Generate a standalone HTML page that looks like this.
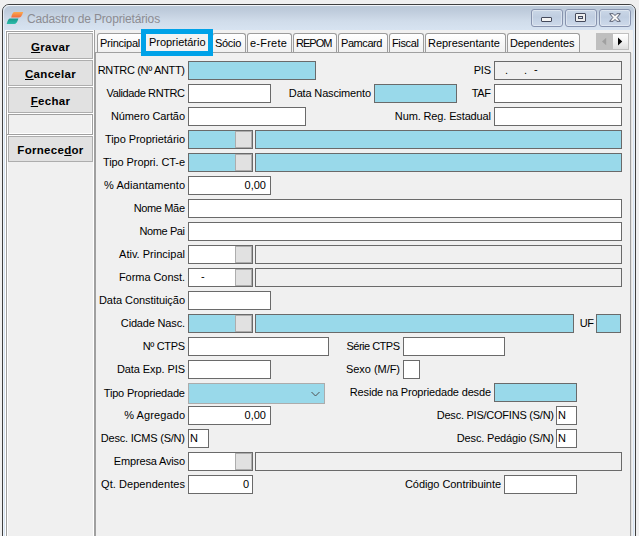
<!DOCTYPE html>
<html><head><meta charset="utf-8">
<style>
html,body{margin:0;padding:0;}
body{width:639px;height:536px;overflow:hidden;background:#f0f0f0;position:relative;font-family:"Liberation Sans",sans-serif;font-size:11px;color:#000;}
.abs,.abs div,.abs svg,.ft,.fr{position:absolute;box-sizing:border-box;}
#win{left:2px;top:4px;width:634px;height:560px;border:1px solid #404040;border-radius:7px 7px 0 0;background:#d7e4f2;overflow:hidden;}
#win:after{content:'';position:absolute;left:0;top:0;right:0;bottom:0;border-radius:6px 6px 0 0;box-shadow:inset 1px 1px 0 rgba(255,255,255,.55),inset -1px 0 0 rgba(255,255,255,.55);pointer-events:none;}
#tbar{left:0;top:0;width:632px;height:25px;background:linear-gradient(#e4ebf4 0px,#e4ebf4 1px,#bccad9 1px,#bfccdc 6px,#d0dcea 16px,#d7e3f1 25px);}
#title{left:24px;top:6px;font-size:12px;color:#8c8c92;white-space:nowrap;line-height:16px;letter-spacing:-0.15px;}
.cbtn{top:4px;width:32px;height:18px;border:1px solid #8793ae;border-radius:3px;background:linear-gradient(#cad7e7,#bfcde0 45%,#c2d0e3 55%,#cedaea);box-shadow:inset 0 0 0 1px rgba(255,255,255,.38);}
#client{left:2px;top:25px;width:628px;height:540px;background:#f0f0f0;}
.hl{background:#fff;} .sh{background:#a0a0a0;}
.lbl{white-space:nowrap;line-height:13px;height:13px;}
.f{border:1px solid #6a6a6a;background:#fff;}
.f.b{background:#99d9ea;}
.f.d{background:#f0f0f0;}
.f.cb{border-color:#acacac;}
.ft{top:2px;line-height:13px;white-space:nowrap;}
.fr{top:2px;right:4px;line-height:13px;white-space:nowrap;}
.lk{width:17px;height:17px;top:0;right:0;background:#e1e1e1;border:1px solid #adadad;}
.btn{left:5px;width:85px;height:26px;background:#e1e1e1;border:1px solid #adadad;text-align:center;font-weight:bold;font-size:11.5px;letter-spacing:0.3px;line-height:24px;padding-top:1px;}
.tab{height:20px;border:1px solid #9c9c9c;border-bottom:none;border-radius:3px 3px 0 0;background:linear-gradient(#ffffff,#f7f7f7 50%,#f0f0f0);line-height:19px;text-align:left;padding-left:2px;white-space:nowrap;}
u{text-decoration-thickness:1px;text-underline-offset:1px;}
</style></head><body>
<div class="abs" id="win">
 <div id="tbar"></div>
 <svg style="left:3px;top:7px" width="18" height="12" viewBox="0 0 18 12"><defs><linearGradient id="go" x1="0" y1="0" x2="0" y2="1"><stop offset="0" stop-color="#fbab4e"/><stop offset="1" stop-color="#f1683a"/></linearGradient><linearGradient id="gt" x1="0" y1="0" x2="0" y2="1"><stop offset="0" stop-color="#17988b"/><stop offset="1" stop-color="#2dbcab"/></linearGradient></defs><path d="M8.6 0 L17.2 0 Q15.6 5.5 12.8 5.5 L5.2 5.5 Q6.2 0 8.6 0Z" fill="url(#go)"/><path d="M4.2 6.4 L12.4 6.4 Q10.8 12 8.2 12 L0.7 12 Q1.8 6.4 4.2 6.4Z" fill="url(#gt)"/></svg>
 <div id="title">Cadastro de Proprietários</div>
 <div class="cbtn" style="left:528px"><div style="left:9px;top:7px;width:11px;height:5px;border:1px solid #454a5c;background:#f4f4f4;border-radius:1px"></div></div>
 <div class="cbtn" style="left:562px"><div style="left:9px;top:3px;width:11px;height:9px;border:1px solid #454a5c;background:#eeeeee;border-radius:1px"><div style="left:2px;top:2px;width:5px;height:3px;border:1px solid #454a5c;background:#d4deeb"></div></div></div>
 <div class="cbtn" style="left:596px"><svg style="left:9px;top:3px" width="12" height="10" viewBox="0 0 12 10"><path d="M0.7 0.7 L4.2 0.7 L6 2.6 L7.8 0.7 L11.3 0.7 L8.2 4.5 L11.3 8.3 L7.8 8.3 L6 6.4 L4.2 8.3 L0.7 8.3 L3.8 4.5 Z" fill="#f6f6f6" stroke="#50566a" stroke-width="0.95" stroke-linejoin="round"/></svg></div>
 <!-- client -->
 <div id="client"></div>
 <!-- left panel bevels -->
 <div class="hl" style="left:2px;top:25px;width:89px;height:1px"></div>
 <div class="hl" style="left:2px;top:25px;width:1px;height:520px"></div>
 <div class="sh" style="left:3px;top:26px;width:87px;height:1px"></div>
 <div class="sh" style="left:3px;top:26px;width:1px;height:520px"></div>
 <div class="hl" style="left:4px;top:27px;width:86px;height:102px"></div>
 <div class="hl" style="left:90px;top:26px;width:1px;height:520px"></div>
 <div class="sh" style="left:91px;top:25px;width:1px;height:520px"></div>
 <div class="sh" style="left:3px;top:129px;width:87px;height:1px"></div>
 <div class="hl" style="left:4px;top:130px;width:86px;height:1px"></div>
 <div class="hl" style="left:4px;top:130px;width:1px;height:420px"></div>
 <div class="btn" style="top:28px"><u>G</u>ravar</div>
 <div class="btn" style="top:55px"><u>C</u>ancelar</div>
 <div class="btn" style="top:82px"><u>F</u>echar</div>
 <div style="left:5px;top:109px;width:85px;height:21px;background:#f0f0f0;border:1px solid #a0a0a0;box-shadow:inset -1px -1px 0 #fff"></div>
 <div class="btn" style="top:131px">Fornece<u>d</u>or</div>
 <!-- tabs -->
 <div class="tab" style="left:94px;top:28px;width:48px;letter-spacing:-0.243px">Principal</div>
<div class="tab" style="left:209px;top:28px;width:34px;letter-spacing:-0.306px">Sócio</div>
<div class="tab" style="left:244px;top:28px;width:45px;letter-spacing:0.219px">e-Frete</div>
<div class="tab" style="left:290px;top:28px;width:44px;letter-spacing:-0.989px">REPOM</div>
<div class="tab" style="left:335px;top:28px;width:50px;letter-spacing:-0.433px">Pamcard</div>
<div class="tab" style="left:386px;top:28px;width:35px;letter-spacing:-0.356px">Fiscal</div>
<div class="tab" style="left:422px;top:28px;width:81px;letter-spacing:-0.029px">Representante</div>
<div class="tab" style="left:504px;top:28px;width:73px;letter-spacing:-0.105px">Dependentes</div>

 <!-- tab page -->
 <div style="left:92px;top:47px;width:536px;height:520px;border:1px solid #a0a0a0;border-bottom:none;background:#f0f0f0"></div>
 <div style="left:628px;top:48px;width:1px;height:520px;background:#e3e3e3"></div>
 <!-- selected tab highlight -->
 <div style="left:138px;top:24px;width:72px;height:27px;border:5px solid #00a2e8;background:#f3f3f3;text-align:center"><div class="lbl" style="left:3px;width:62px;top:2px;text-align:left;letter-spacing:-0.030px">Proprietário</div></div>
 <!-- scroll -->
 <div style="left:593px;top:28px;width:33px;height:17px;background:#bfbfbf"><div style="left:17px;top:1px;width:15px;height:15px;background:linear-gradient(#ffffff,#f2f2f2 50%,#dddddd)"></div>
 <svg style="left:0;top:0" width="33" height="17" viewBox="0 0 33 17"><path d="M6 8.5 L10.2 4.8 L10.2 12.2Z" fill="#a0a0a0"/><path d="M26.2 8.5 L22 4.6 L22 12.4Z" fill="#000"/></svg></div>
 <div class="lbl r" style="right:450.33px;top:59px;letter-spacing:-0.334px;">RNTRC (Nº ANTT)</div>
<div class="lbl r" style="right:450.40px;top:82px;letter-spacing:-0.397px;">Validade RNTRC</div>
<div class="lbl r" style="right:450.09px;top:105px;letter-spacing:-0.093px;">Número Cartão</div>
<div class="lbl r" style="right:450.05px;top:128px;letter-spacing:-0.053px;">Tipo Proprietário</div>
<div class="lbl r" style="right:450.08px;top:151px;letter-spacing:-0.079px;">Tipo Propri. CT-e</div>
<div class="lbl r" style="right:449.94px;top:174px;letter-spacing:0.062px;">% Adiantamento</div>
<div class="lbl r" style="right:450.35px;top:197px;letter-spacing:-0.350px;">Nome Mãe</div>
<div class="lbl r" style="right:450.41px;top:220px;letter-spacing:-0.412px;">Nome Pai</div>
<div class="lbl r" style="right:449.99px;top:243px;letter-spacing:0.011px;">Ativ. Principal</div>
<div class="lbl r" style="right:450.05px;top:266px;letter-spacing:-0.053px;">Forma Const.</div>
<div class="lbl r" style="right:450.05px;top:289px;letter-spacing:-0.049px;">Data Constituição</div>
<div class="lbl r" style="right:450.17px;top:312px;letter-spacing:-0.171px;">Cidade Nasc.</div>
<div class="lbl r" style="right:450.34px;top:335px;letter-spacing:-0.337px;">Nº CTPS</div>
<div class="lbl r" style="right:450.08px;top:358px;letter-spacing:-0.084px;">Data Exp. PIS</div>
<div class="lbl r" style="right:450.19px;top:382px;letter-spacing:-0.187px;">Tipo Propriedade</div>
<div class="lbl r" style="right:449.89px;top:404px;letter-spacing:0.106px;">% Agregado</div>
<div class="lbl r" style="right:450.21px;top:427px;letter-spacing:-0.213px;">Desc. ICMS (S/N)</div>
<div class="lbl r" style="right:450.17px;top:450px;letter-spacing:-0.167px;">Empresa Aviso</div>
<div class="lbl r" style="right:449.94px;top:473px;letter-spacing:0.055px;">Qt. Dependentes</div>
<div class="lbl r" style="right:144.24px;top:59px;letter-spacing:-0.245px;">PIS</div>
<div class="lbl r" style="right:144.32px;top:82px;letter-spacing:-0.323px;">TAF</div>
<div class="lbl r" style="right:144.14px;top:105px;letter-spacing:-0.135px;">Num. Reg. Estadual</div>
<div class="lbl r" style="right:264.16px;top:82px;letter-spacing:-0.158px;">Data Nascimento</div>
<div class="lbl r" style="right:41.34px;top:312px;letter-spacing:-0.336px;">UF</div>
<div class="lbl r" style="right:235.51px;top:335px;letter-spacing:-0.508px;">Série CTPS</div>
<div class="lbl r" style="right:235.04px;top:358px;letter-spacing:-0.041px;">Sexo (M/F)</div>
<div class="lbl r" style="right:144.17px;top:381px;letter-spacing:-0.168px;">Reside na Propriedade desde</div>
<div class="lbl r" style="right:81.24px;top:404px;letter-spacing:-0.239px;">Desc. PIS/COFINS (S/N)</div>
<div class="lbl r" style="right:81.17px;top:427px;letter-spacing:-0.172px;">Desc. Pedágio (S/N)</div>
<div class="lbl r" style="right:134.06px;top:473px;letter-spacing:-0.065px;">Código Contribuinte</div>
<div class="f b" style="left:185px;top:56px;width:128px;height:19px"></div>
<div class="f d" style="left:491px;top:56px;width:128px;height:19px"><span class="ft" style="left:10px">.</span><span class="ft" style="left:29px">.</span><span class="ft" style="left:39px;top:1px">-</span></div>
<div class="f " style="left:185px;top:79px;width:83px;height:19px"></div>
<div class="f b" style="left:371px;top:79px;width:83px;height:19px"></div>
<div class="f " style="left:491px;top:79px;width:128px;height:19px"></div>
<div class="f " style="left:185px;top:102px;width:118px;height:19px"></div>
<div class="f " style="left:491px;top:102px;width:128px;height:19px"></div>
<div class="f b" style="left:185px;top:125px;width:65px;height:19px"><div class="lk"></div></div>
<div class="f b" style="left:252px;top:125px;width:367px;height:19px"></div>
<div class="f b" style="left:185px;top:148px;width:65px;height:19px"><div class="lk"></div></div>
<div class="f b" style="left:252px;top:148px;width:367px;height:19px"></div>
<div class="f " style="left:185px;top:171px;width:83px;height:19px"><span class="fr">0,00</span></div>
<div class="f " style="left:185px;top:194px;width:434px;height:19px"></div>
<div class="f " style="left:185px;top:217px;width:434px;height:19px"></div>
<div class="f " style="left:185px;top:240px;width:65px;height:19px"><div class="lk"></div></div>
<div class="f d" style="left:252px;top:240px;width:367px;height:19px"></div>
<div class="f " style="left:185px;top:263px;width:65px;height:19px"><span class="ft" style="left:12px;top:1px">-</span><div class="lk"></div></div>
<div class="f d" style="left:252px;top:263px;width:367px;height:19px"></div>
<div class="f " style="left:185px;top:286px;width:83px;height:19px"></div>
<div class="f b" style="left:185px;top:309px;width:65px;height:19px"><div class="lk"></div></div>
<div class="f b" style="left:252px;top:309px;width:319px;height:19px"></div>
<div class="f b" style="left:593px;top:309px;width:25px;height:19px"></div>
<div class="f " style="left:185px;top:332px;width:141px;height:19px"></div>
<div class="f " style="left:400px;top:332px;width:102px;height:19px"></div>
<div class="f " style="left:185px;top:355px;width:83px;height:19px"></div>
<div class="f " style="left:400px;top:355px;width:17px;height:19px"></div>
<div class="f b cb" style="left:185px;top:378px;width:137px;height:21px"><svg style="right:3px;top:7px" width="11" height="7" viewBox="0 0 11 7"><path d="M1.5 1 L5.5 5 L9.5 1" fill="none" stroke="#505050" stroke-width="1"/></svg></div>
<div class="f b" style="left:491px;top:378px;width:83px;height:19px"></div>
<div class="f " style="left:185px;top:401px;width:83px;height:19px"><span class="fr">0,00</span></div>
<div class="f " style="left:553px;top:401px;width:21px;height:19px"><span class="ft" style="left:1px">N</span></div>
<div class="f " style="left:185px;top:424px;width:21px;height:19px"><span class="ft" style="left:1px">N</span></div>
<div class="f " style="left:553px;top:424px;width:21px;height:19px"><span class="ft" style="left:1px">N</span></div>
<div class="f " style="left:185px;top:447px;width:65px;height:19px"><div class="lk"></div></div>
<div class="f d" style="left:252px;top:447px;width:367px;height:19px"></div>
<div class="f " style="left:185px;top:470px;width:65px;height:19px"><span class="fr" style="right:3px">0</span></div>
<div class="f " style="left:501px;top:470px;width:73px;height:19px"></div>
</div>
</body></html>
